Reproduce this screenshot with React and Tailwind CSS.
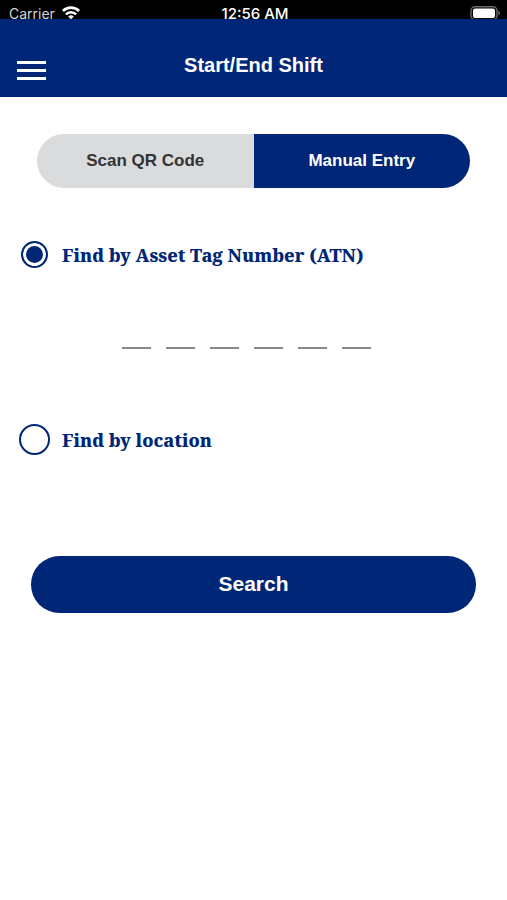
import React, { useState } from 'react';

const StatusBar = () => (
  <div className="grid h-[19px] grid-cols-3 items-end bg-black pl-[9px] pr-[6px] font-['Inter',sans-serif] text-[14px] leading-[11px] text-white">
    <div className="flex items-end gap-[7px]">
      <span className="text-gray-300">Carrier</span>
      <svg className="h-[13px] w-[18px]" viewBox="0 0 18 13" fill="none" stroke="white" strokeWidth="2.6" aria-hidden="true">
        <path d="M0.9 5a11.5 11.5 0 0 1 16.2 0" />
        <path d="M3.9 8.3a7.2 7.2 0 0 1 10.2 0" />
        <path d="M9 13.4L6.2 10.6a4 4 0 0 1 5.6 0z" fill="white" stroke="none" />
      </svg>
    </div>
    <span className="text-center text-[15px] font-medium">12:56 AM</span>
    <svg className="h-[13px] w-[31px] justify-self-end" viewBox="0 0 31 13" aria-hidden="true">
      <rect x="1" y="0.7" width="26" height="13" rx="4" fill="none" stroke="#6b6b6b" strokeWidth="1.4" />
      <rect x="3" y="2.5" width="22" height="9.5" rx="2" fill="white" />
      <path d="M28.4 4.6q3.6 2.4 0 4.8z" fill="#6b6b6b" />
    </svg>
  </div>
);

const Header = ({ title }) => (
  <header className="grid h-[78px] grid-cols-[1fr_auto_1fr] items-center bg-[#002677] px-[17px] pt-[14px]">
    <button type="button" aria-label="Menu" className="mt-[11px] flex w-[29px] flex-col gap-[5px]">
      <span className="h-[3px] w-full bg-white"></span>
      <span className="h-[3px] w-full bg-white"></span>
      <span className="h-[3px] w-full bg-white"></span>
    </button>
    <h1 className="text-[20px] font-bold leading-6 text-white">{title}</h1>
  </header>
);

const RadioOption = ({ label, value, selected, onSelect }) => (
  <label className="flex h-8 items-center gap-3 text-[18px] font-extrabold text-[#002677]">
    <span className="flex w-[31px] shrink-0 justify-center">
      <input
        type="radio"
        name="findBy"
        value={value}
        checked={selected}
        onChange={() => onSelect(value)}
        className="h-[31px] w-[31px] appearance-none rounded-full border-2 border-[#002677] bg-white checked:h-[27px] checked:w-[27px] checked:bg-[#002677] checked:shadow-[inset_0_0_0_3px_white]"
      />
    </span>
    <span className="pt-[3px] font-['Noto_Serif','Liberation_Serif',serif]">{label}</span>
  </label>
);

const App = () => {
  const [mode, setMode] = useState('manual');
  const [findBy, setFindBy] = useState('atn');

  const tabClass = (active) =>
    active ? 'bg-[#002677] text-white' : 'bg-[#d9dbdc] text-[#333333]';

  return (
    <div className="min-h-screen bg-white font-['Liberation_Sans',Arial,sans-serif]">
      <StatusBar />
      <Header title="Start/End Shift" />

      <main>
        {/* Entry mode */}
        <div className="mx-[37px] mt-[37px] grid h-[54px] grid-cols-2 overflow-hidden rounded-full text-[17px] font-bold">
          <button type="button" className={tabClass(mode === 'scan')} onClick={() => setMode('scan')}>
            Scan QR Code
          </button>
          <button type="button" className={tabClass(mode === 'manual')} onClick={() => setMode('manual')}>
            Manual Entry
          </button>
        </div>

        <form className="flex flex-col" onSubmit={(e) => e.preventDefault()}>
          <div className="mt-[50px] px-[19px]">
            <RadioOption
              label="Find by Asset Tag Number (ATN)"
              value="atn"
              selected={findBy === 'atn'}
              onSelect={setFindBy}
            />
          </div>

          {/* Asset tag digits */}
          <div className="mt-[47px] flex justify-center gap-[15px] pr-[14px]">
            {[1, 2, 3, 4, 5, 6].map((n) => (
              <input
                key={n}
                type="text"
                inputMode="numeric"
                maxLength={1}
                aria-label={`Digit ${n}`}
                className="h-8 w-[29px] border-b-2 border-[#8a8a8a] bg-transparent text-center text-[20px] outline-none"
              />
            ))}
          </div>

          <div className="mt-[74px] px-[19px]">
            <RadioOption
              label="Find by location"
              value="location"
              selected={findBy === 'location'}
              onSelect={setFindBy}
            />
          </div>

          <button type="submit" className="mx-[31px] mt-[101px] h-[57px] rounded-full bg-[#002677] pb-[2px] text-[21px] font-bold text-white">
            Search
          </button>
        </form>
      </main>
    </div>
  );
};

export default App;
